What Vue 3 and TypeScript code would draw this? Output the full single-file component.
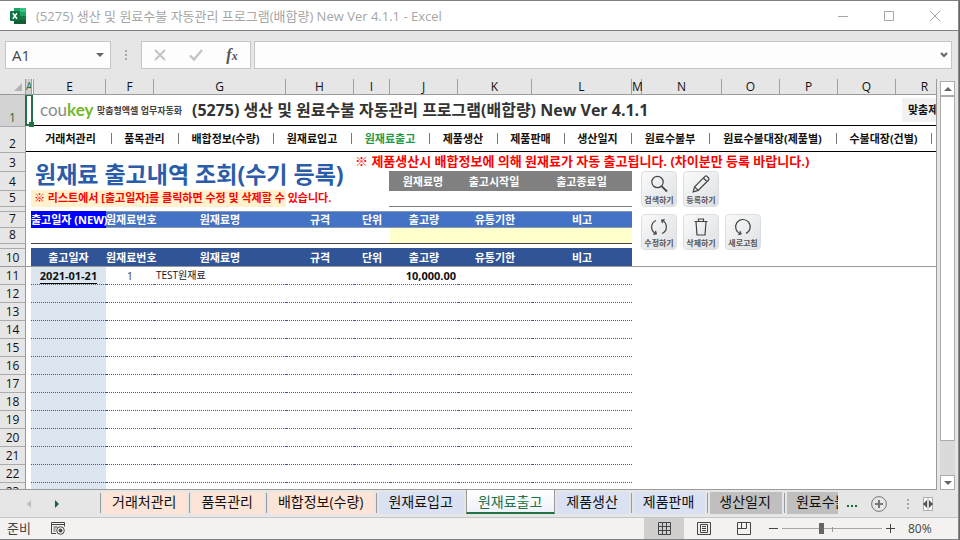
<script setup lang="ts">
import { ref } from 'vue'

interface Track { id: string; size: number }
interface SheetTab { name: string; tone: string }

const columns: Track[] = [
  { id: 'E', size: 72 }, { id: 'F', size: 48 }, { id: 'G', size: 132 }, { id: 'H', size: 68 },
  { id: 'I', size: 36 }, { id: 'J', size: 68 }, { id: 'K', size: 74 }, { id: 'L', size: 100 },
  { id: 'M', size: 10 }, { id: 'N', size: 80 }, { id: 'O', size: 58 }, { id: 'P', size: 58 },
  { id: 'Q', size: 58 }, { id: 'R', size: 58 },
]

const frozenRows: Track[] = [
  { id: '1', size: 32 }, { id: '2', size: 26 }, { id: '3', size: 19 }, { id: '4', size: 19 },
  { id: '5', size: 16 }, { id: '', size: 5 }, { id: '7', size: 16 }, { id: '8', size: 16 },
  { id: '', size: 5 }, { id: '10', size: 18 },
]
const dataRows = Array.from({ length: 13 }, (_, i) => i + 11)

const menu = ['거래처관리', '품목관리', '배합정보(수량)', '원재료입고', '원재료출고', '제품생산',
  '제품판매', '생산일지', '원료수불부', '원료수불대장(제품별)', '수불대장(건별)']
const activeMenu = '원재료출고'

const fields = ['원재료번호', '원재료명', '규격', '단위', '출고량', '유통기한', '비고']
const colWidths = [75, 48, 132, 68, 36, 68, 74, 100]

const tabs: SheetTab[] = [
  { name: '거래처관리', tone: 'peach' }, { name: '품목관리', tone: 'peach' },
  { name: '배합정보(수량)', tone: 'peach' }, { name: '원재료입고', tone: 'blue' },
  { name: '원재료출고', tone: 'active' }, { name: '제품생산', tone: 'blue' },
  { name: '제품판매', tone: 'blue' }, { name: '생산일지', tone: 'grey' },
  { name: '원료수불부', tone: 'grey' },
]

const cellName = ref('A1')
const formula = ref('')
const zoom = ref(39)
</script>

<template>
  <div class="window">
    <header class="titlebar">
      <svg class="app-icon" viewBox="0 0 16 16" width="16" height="16" aria-hidden="true">
        <path d="M4 0h6v4H4z" fill="#21a366" /><path d="M10 0h6v4h-6z" fill="#33c481" />
        <path d="M4 4h6v4H4z" fill="#107c41" /><path d="M10 4h6v4h-6z" fill="#21a366" />
        <path d="M4 8h6v8H4z" fill="#185c37" /><path d="M10 8h6v4h-6z" fill="#107c41" />
        <path d="M10 12h6v4h-6z" fill="#185c37" />
        <rect x="0" y="3" width="10" height="10" rx="1" fill="#0f7040" />
        <path d="M2.8 5.2l4.2 5.6M7 5.2l-4.2 5.6" stroke="#fff" stroke-width="1.5" />
      </svg>
      <span class="doc-title">(5275) 생산 및 원료수불 자동관리 프로그램(배합량) New Ver 4.1.1 - Excel</span>
      <div class="win-buttons">
        <button aria-label="최소화"><svg viewBox="0 0 10 10" width="10" height="10"><path d="M0 5.5h10" /></svg></button>
        <button aria-label="최대화"><svg viewBox="0 0 10 10" width="10" height="10"><path d="M.5.5h9v9h-9z" /></svg></button>
        <button aria-label="닫기"><svg viewBox="0 0 10 10" width="10" height="10"><path d="M0 0l10 10M10 0L0 10" /></svg></button>
      </div>
    </header>

    <div class="formula-bar">
      <div class="box name-box">
        <input v-model="cellName" aria-label="이름 상자">
        <button aria-label="이름 목록"><svg viewBox="0 0 8 4" width="8" height="4"><path d="M0 0h8L4 4z" fill="#666" /></svg></button>
      </div>
      <svg class="grip" viewBox="0 0 2 10" width="2" height="10"><path d="M0 0h2v2H0zM0 4h2v2H0zM0 8h2v2H0z" fill="#a6a6a6" /></svg>
      <div class="box fx-box">
        <button aria-label="취소"><svg viewBox="0 0 12 12" width="12" height="12"><path d="M1 1l10 10M11 1L1 11" stroke="#c4c4c4" stroke-width="2" /></svg></button>
        <button aria-label="입력"><svg viewBox="0 0 14 12" width="14" height="12"><path d="M1 6.500l4 4L13 1" fill="none" stroke="#c4c4c4" stroke-width="2.400" /></svg></button>
        <button class="fx" aria-label="함수 삽입"><i>f</i><i class="sub">x</i></button>
      </div>
      <div class="box input-box">
        <input v-model="formula" aria-label="수식 입력줄">
        <button aria-label="수식 입력줄 확장"><svg viewBox="0 0 8 6" width="8" height="6"><path d="M1 1l3 3 3-3" fill="none" stroke="#666" stroke-width="2" /></svg></button>
      </div>
    </div>

    <div class="workbook">
      <main class="sheet">
        <div class="col-heads">
          <div class="corner"><svg viewBox="0 0 8 8" width="8" height="8"><path d="M8 0v8H0z" fill="#b4b4b4" /></svg></div>
          <div class="col-head first">A</div>
          <div class="col-head stub"></div>
          <div v-for="c in columns" :key="c.id" class="col-head" :style="{ width: c.size + 'px' }">{{ c.id }}</div>
        </div>

        <div class="grid">
          <div class="row-heads">
            <div v-for="(r, i) in frozenRows" :key="i" class="row-head" :class="{ selected: i === 0 }" :style="{ height: r.size + 'px' }">{{ r.id }}</div>
            <div v-for="n in dataRows" :key="n" class="row-head data">{{ n }}</div>
          </div>

          <div class="cells">
            <div class="selection"><span class="handle"></span></div>
            <div class="banner">
              <span class="logo">cou<b>key</b></span>
              <span class="slogan">맞춤형엑셀 업무자동화</span>
              <h1>(5275) 생산 및 원료수불 자동관리 프로그램(배합량) New Ver 4.1.1</h1>
              <a href="#" class="custom">맞춤제</a>
            </div>
            <nav class="menu">
              <a v-for="m in menu" :key="m" href="#" :class="{ current: m === activeMenu }">{{ m }}</a>
            </nav>

            <section class="top">
              <h2>원재료 출고내역 조회(수기 등록)</h2>
              <p class="notice">※ 제품생산시 배합정보에 의해 원재료가 자동 출고됩니다. (차이분만 등록 바랍니다.)</p>
              <p class="hint"><span>※ 리스트에서 [출고일자]를 클릭하면 수정 및 삭제할 수 있습니다.</span></p>
              <table class="search">
                <colgroup><col style="width: 68px"><col style="width: 74px"><col style="width: 101px"></colgroup>
                <thead><tr><th>원재료명</th><th>출고시작일</th><th>출고종료일</th></tr></thead>
                <tbody><tr><td></td><td></td><td></td></tr></tbody>
              </table>

              <div class="actions">
                <button>
                  <svg viewBox="0 0 20 20"><circle cx="8.5" cy="8" r="5.7" /><path d="M12.6 12.2l5.4 5.3" stroke-width="1.8" /></svg>
                  <span>검색하기</span>
                </button>
                <button>
                  <svg viewBox="0 0 20 20"><path d="M2.2 17.8l1.4-5L14 2.4q1-.9 2 0l1.6 1.6q.9 1 0 2L7.2 16.400zM12.400 4l3.600 3.600M3.600 12.800l3.600 3.600" /></svg>
                  <span>등록하기</span>
                </button>
                <i class="break"></i>
                <button>
                  <svg viewBox="0 0 20 20"><path d="M7 3.500A7.200 7.200 0 0 0 6.500 16.500M13 16.500A7.200 7.200 0 0 0 13.500 3.500M4.300 17.300l3-.5-.8-3M15.700 2.700l-3 .5.8 3" /></svg>
                  <span>수정하기</span>
                </button>
                <button>
                  <svg viewBox="0 0 20 20"><path d="M3.500 4.500h13M7.500 4.500v-2.500h5v2.500M5 4.500l1 13.500h8l1-13.500" /></svg>
                  <span>삭제하기</span>
                </button>
                <button>
                  <svg viewBox="0 0 20 20"><path d="M7.800 16.800A7.300 7.300 0 1 1 13 16.400M5.300 17.700l2.700-.8-1-2.800" /></svg>
                  <span>새로고침</span>
                </button>
              </div>

              <div class="heads">
                <table class="entry">
                  <colgroup><col v-for="(w, i) in colWidths" :key="i" :style="{ width: w + 'px' }"></colgroup>
                  <thead><tr><th class="new">출고일자 (NEW)</th><th v-for="f in fields" :key="f">{{ f }}</th></tr></thead>
                  <tbody><tr><td v-for="(w, i) in colWidths" :key="i" :class="{ fill: i > 4 }"></td></tr></tbody>
                </table>
              </div>
            </section>

            <table class="list">
              <colgroup><col v-for="(w, i) in colWidths" :key="i" :style="{ width: w + 'px' }"></colgroup>
              <thead><tr><th>출고일자</th><th v-for="f in fields" :key="f">{{ f }}</th></tr></thead>
              <tbody>
                <tr>
                  <td class="date"><a href="#">2021-01-21</a></td>
                  <td class="no">1</td><td class="name">TEST원재료</td><td></td><td></td>
                  <td class="qty">10,000.00</td><td></td><td></td>
                </tr>
                <tr v-for="n in dataRows.length - 1" :key="n"><td class="date"></td><td v-for="k in 7" :key="k"></td></tr>
              </tbody>
            </table>
          </div>
          <div class="freeze"></div>
        </div>
      </main>

      <div class="scroll">
        <button aria-label="위로"><svg viewBox="0 0 8 4" width="8" height="4"><path d="M0 4h8L4 0z" fill="#666" /></svg></button>
        <div class="track"><div class="thumb"></div></div>
        <button aria-label="아래로"><svg viewBox="0 0 8 4" width="8" height="4"><path d="M0 0h8L4 4z" fill="#666" /></svg></button>
      </div>
    </div>

    <div class="tabs">
      <div class="tab-nav">
        <button aria-label="이전 시트"><svg viewBox="0 0 4 8" width="4" height="8"><path d="M4 0v8L0 4z" fill="#bdbdbd" /></svg></button>
        <button aria-label="다음 시트"><svg viewBox="0 0 4 8" width="4" height="8"><path d="M0 0v8l4-4z" fill="#0e6b3a" /></svg></button>
      </div>
      <div class="tab-list">
        <button v-for="t in tabs" :key="t.name" class="tab" :class="t.tone"><span>{{ t.name }}</span></button>
      </div>
      <button class="more" aria-label="시트 더 보기"><svg viewBox="0 0 11 2" width="11" height="2"><path d="M0 0h2v2H0zM4 0h2v2H4zM8 0h2v2H8z" fill="#0e6b3a" /></svg></button>
      <button class="add" aria-label="새 시트"><svg viewBox="0 0 16 16" width="16" height="16"><circle cx="8" cy="8" r="7.400" fill="none" stroke="#777" /><path d="M8 4v8M4 8h8" stroke="#777" stroke-width="2" /></svg></button>
      <svg class="grip" viewBox="0 0 2 10" width="2" height="10"><path d="M0 0h2v2H0zM0 4h2v2H0zM0 8h2v2H0z" fill="#a6a6a6" /></svg>
      <svg class="hscroll" viewBox="0 0 10 14" width="10" height="14"><path d="M.5.5h9v13h-9z" fill="#fff" stroke="#ababab" /><path d="M4 3v8L0 7zM6 3v8l4-4z" fill="#555" /><path d="M5 0v14" stroke="#ababab" /></svg>
    </div>

    <footer class="status">
      <span class="ready">준비</span>
      <svg class="macro" viewBox="0 0 14 13" width="14" height="13" fill="none" stroke="#444"><path d="M5 11.500H.5v-11h13v4M.5 2.500h13M2.500 5h4M2.500 7h2M2.500 9h2" /><circle cx="9.500" cy="8.500" r="3.800" /><circle cx="9.500" cy="8.500" r="1.500" fill="#444" /></svg>
      <div class="views">
        <button class="on" aria-label="기본"><svg viewBox="0 0 13 13" width="13" height="13"><path d="M.5.5h12v12H.5zM4.500.5v12M8.500.5v12M.5 4.500h12M.5 8.500h12" /></svg></button>
        <button aria-label="페이지 레이아웃"><svg viewBox="0 0 14 13" width="14" height="13"><path d="M.5.5h13v12H.5zM3.500 2.500h7v8h-7zM5 4.500h4M5 6.500h4M5 8.500h4" /></svg></button>
        <button aria-label="페이지 나누기 미리 보기"><svg viewBox="0 0 14 13" width="14" height="13"><path d="M.5.5h13v12H.5zM4.500.5v6M9.500.5v6M.5 6.500h9" /></svg></button>
      </div>
      <div class="zoom">
        <button aria-label="축소"><svg viewBox="0 0 9 9" width="9" height="9"><path d="M0 4.500h9" /></svg></button>
        <div class="slider"><input v-model="zoom" type="range" min="0" max="100" aria-label="확대/축소"></div>
        <button aria-label="확대"><svg viewBox="0 0 9 9" width="9" height="9"><path d="M0 4.500h9M4.500 0v9" /></svg></button>
        <span class="percent">80%</span>
      </div>
    </footer>
  </div>
</template>

<style>
body {
  overflow: hidden;
}
</style>

<style scoped>
.window {
  box-sizing: border-box;
  display: flex;
  flex-direction: column;
  height: 100vh;
  border-top: 1px solid #808080;
  border-bottom: 1px solid #808080;
  border-right: 1px solid #1979ca;
  background: #e6e6e6;
  color: #111;
  font-family: "Open Sans", "Noto Sans CJK KR", sans-serif;
  font-size: 12px;
  box-shadow: inset -1px 0 #8a8a8a;
}
.window * { box-sizing: border-box; }
button {
  display: flex;
  align-items: center;
  justify-content: center;
  padding: 0;
  border: 0;
  background: none;
  color: inherit;
  font: inherit;
}
input {
  min-width: 0;
  padding: 0;
  border: 0;
  outline: 0;
  background: none;
  color: inherit;
  font: inherit;
}
a { color: inherit; text-decoration: none; }
h1, h2, p { margin: 0; }

.titlebar {
  display: flex;
  align-items: center;
  flex: none;
  height: 30px;
  padding-left: 10px;
  margin-right: 1px;
  border-bottom: 1px solid #808080;
  background: #fff;
}
.doc-title {
  flex: 1;
  padding-left: 10px;
  color: #a6a6a6;
  font-size: 13px;
  line-height: 20px;
  white-space: nowrap;
}
.win-buttons { display: flex; }
.win-buttons button { width: 46px; height: 28px; }
.win-buttons svg { fill: none; stroke: #a6a6a6; }

.formula-bar {
  display: flex;
  align-items: center;
  flex: none;
  height: 48px;
  padding: 0 7px 0 5px;
}
.box {
  display: flex;
  height: 28px;
  border: 1px solid #c6c6c6;
  background: #fdfdfd;
}
.name-box { width: 106px; }
.name-box input { flex: 1; padding-left: 6px; color: #444; font-size: 15px; }
.name-box button { width: 20px; }
.formula-bar .grip { margin: 0 14px; }
.fx-box { width: 110px; margin-right: 3px; }
.fx-box button { flex: 1; }
.fx { color: #555; font: bold 16px "Liberation Serif", serif; }
.fx .sub { align-self: end; padding-bottom: 4px; font-size: 12px; }
.input-box { flex: 1; }
.input-box input { flex: 1; padding-left: 6px; font-size: 14px; }
.input-box button { width: 14px; }

.workbook { display: flex; flex: 1; min-height: 0; }
.sheet {
  display: flex;
  flex: 1;
  flex-direction: column;
  min-width: 0;
  border-right: 1px solid #9a9a9a;
}
.col-heads {
  display: flex;
  flex: none;
  height: 16px;
  overflow: hidden;
  border-bottom: 1px solid #9a9a9a;
}
.corner {
  display: flex;
  flex: none;
  justify-content: flex-end;
  align-items: center;
  width: 26px;
  padding-right: 3px;
  border-right: 1px solid #9a9a9a;
}
.col-head {
  flex: none;
  border-right: 1px solid #a0a0a0;
  line-height: 15px;
  text-align: center;
}
.first { width: 6px; overflow: hidden; background: #cfcfcf; color: #217346; font-size: 10px; }
.stub { width: 2px; background: #f4f4f4; }

.grid {
  display: flex;
  flex: 1;
  position: relative;
  min-height: 0;
  overflow: hidden;
  background: #fff;
  border-bottom: 1px solid #9a9a9a;
}
.row-heads {
  flex: none;
  width: 26px;
  border-right: 1px solid #9a9a9a;
  background: #e6e6e6;
}
.row-head {
  display: flex;
  align-items: flex-end;
  justify-content: center;
  border-bottom: 1px solid #ababab;
  line-height: 16px;
}
.row-head.data { height: 18px; }
.row-head.selected { background: #d2d2d2; color: #217346; }
.cells { flex: 1; min-width: 0; overflow: hidden; }
.selection {
  position: absolute;
  top: -1px;
  left: 25px;
  width: 8px;
  height: 32px;
  border: 2px solid #217346;
}
.handle {
  position: absolute;
  right: -3px;
  bottom: -3px;
  width: 5px;
  height: 5px;
  background: #217346;
}
.freeze {
  position: absolute;
  top: 171px;
  left: 0;
  right: 0;
  height: 1px;
  background: #9a9a9a;
}

.banner {
  display: flex;
  align-items: center;
  height: 31px;
  padding-left: 14px;
  border-bottom: 1px solid #000;
  white-space: nowrap;
}
.logo {
  width: 57px;
  color: #8b8b8b;
  font: 17px/24px Lato, sans-serif;
}
.logo b { color: #76b82a; }
.slogan { width: 95px; color: #444; font-size: 9px; font-weight: bold; }
h1 { flex: 1; color: #333; font-size: 16px; line-height: 24px; }
.custom {
  width: 34px;
  padding-left: 6px;
  overflow: hidden;
  background: #f2f2f2;
  font-size: 11px;
  font-weight: bold;
  line-height: 24px;
}

.menu {
  display: grid;
  grid-template-columns: 81px 67px 95px 78px 78px 68px 67px 67px 78px 127px 95px;
  align-items: center;
  height: 26px;
  padding-left: 5px;
  border-bottom: 1px solid #000;
}
.menu a {
  padding-right: 1px;
  border-right: 1px solid #777;
  font-size: 11px;
  font-weight: bold;
  line-height: 11px;
  text-align: center;
  white-space: nowrap;
}
.menu .current { color: #1c9c46; }

.top {
  display: grid;
  grid-template-columns: 324px 34px 243px 1fr;
  grid-template-rows: 19px 19px 17px 41px;
  padding-left: 5px;
}
h2 {
  grid-area: 1 / 1 / 3 / 3;
  padding: 4px 0 0 4px;
  color: #2a5caa;
  font-size: 23px;
  line-height: 36px;
  white-space: nowrap;
}
.notice {
  grid-area: 1 / 2 / 2 / 5;
  color: #f00;
  font-size: 13px;
  font-weight: bold;
  line-height: 19px;
  white-space: nowrap;
}
.hint {
  grid-area: 3 / 1 / 4 / 3;
  width: 255px;
  padding-left: 3px;
  background: #fff2cc;
  color: #f00;
  font-size: 11px;
  font-weight: bold;
  line-height: 16px;
  white-space: nowrap;
}
table { border-collapse: separate; border-spacing: 0; table-layout: fixed; }
th, td {
  padding: 0;
  font-size: 11px;
  line-height: 15px;
  white-space: nowrap;
}
th { color: #fff; font-weight: bold; text-align: center; }
.search { grid-area: 2 / 3 / 4 / 4; width: 243px; }
.search th { height: 20px; background: #808080; }
.search td { height: 16px; border-bottom: 1px solid #808080; }
.actions {
  grid-area: 2 / 4 / 5 / 5;
  display: flex;
  flex-wrap: wrap;
  align-content: flex-start;
  gap: 0 6px;
  padding-left: 9px;
}
.actions button {
  flex-direction: column;
  width: 36px;
  height: 36px;
  border: 1px solid #dcdfe2;
  border-radius: 4px;
  background: linear-gradient(135deg, #fafafa, #dde0e3);
  color: #555;
  font-size: 8px;
  font-weight: bold;
  line-height: 11px;
  white-space: nowrap;
}
.actions svg { width: 20px; height: 20px; fill: none; stroke: #444; stroke-width: 1.2; }
.break { flex-basis: 100%; height: 7px; }
.heads { grid-area: 4 / 1 / 5 / 4; padding: 4px 0; }
.entry { width: 601px; }
.entry th {
  height: 17px;
  border-top: 1px solid #8a98b0;
  border-bottom: 1px solid #8a98b0;
  background: #4472c4;
}
.entry th.new { border-color: #00f; background: #00f; }
.entry td { height: 16px; border-bottom: 1px solid #444; }
.entry .fill { background: #ffffcc; }

.list { width: 601px; margin-left: 5px; }
.list th { height: 19px; background: #305496; padding-bottom: 1px; }
.list td { height: 18px; border-bottom: 1px dotted #2a5caa; }
.list .date { background: #dce6f0; font-weight: bold; text-align: center; }
.date a { border-bottom: 1px solid #000; }
.list .no { color: #444; text-align: center; }
.list .name { padding-left: 2px; font-size: 10px; }
.list .qty { padding-right: 2px; font-weight: bold; text-align: right; }

.scroll {
  display: flex;
  flex: none;
  flex-direction: column;
  width: 22px;
  padding: 2px 4px 0 3px;
}
.scroll button { flex: none; height: 15px; border: 1px solid #ababab; background: #fff; }
.track { flex: 1; background: #dadada; }
.thumb { height: 91%; border: 1px solid #ababab; background: #fff; }

.tabs { display: flex; flex: none; height: 27px; align-items: center; padding-right: 26px; }
.tab-nav { display: flex; flex: none; width: 100px; height: 24px; padding-left: 15px; }
.tab-nav button { width: 28px; }
.tab-list {
  display: flex;
  flex: 1;
  align-self: stretch;
  min-width: 0;
  overflow: hidden;
}
.tab {
  flex: none;
  align-self: stretch;
  align-items: flex-start;
  padding: 2px 2px 3px;
  border-left: 1px solid transparent;
  background: linear-gradient(#9a9a9a, #9a9a9a) 0 3px / 1px 20px no-repeat border-box;
  font-size: 14px;
  line-height: 20px;
}
.tab span { padding: 0 11px 2px 9px; }
.peach span { background: #fce4d6; }
.blue span { background: #d9e1f2; }
.grey span { background: #bfbfbf; }
.tab.active {
  height: 24px;
  padding-right: 1px;
  border-right: 1px solid #9a9a9a;
  border-left-color: #9a9a9a;
  border-bottom: 2px solid #217346;
  background: linear-gradient(#fff, #eef2f9);
  color: #217346;
}
.tab.active + .tab { border-left: 0; background: none; }
.more { width: 28px; height: 20px; padding-top: 4px; }
.add { width: 26px; height: 20px; }
.tabs .grip { margin: 0 14px 0 15px; }

.status {
  display: flex;
  align-items: center;
  flex: none;
  height: 22px;
  margin-right: 1px;
  padding: 0 26px 0 7px;
  border-top: 1px solid #c6c6c6;
  background: #f3f2f1;
  color: #444;
}
.ready { font-size: 13px; line-height: 18px; padding-bottom: 2px; }
.macro { margin-left: 20px; }
.views { display: flex; align-self: stretch; margin-left: auto; }
.views button { width: 40px; }
.views .on { background: #d0cfce; }
.views svg, .zoom svg { fill: none; stroke: #444; }
.zoom { display: flex; align-items: center; margin-left: 5px; }
.slider {
  position: relative;
  display: flex;
  align-items: center;
  width: 100px;
  height: 20px;
  margin: 0 4px;
}
.slider::after {
  content: "";
  position: absolute;
  left: 50%;
  top: 8px;
  width: 1px;
  height: 5px;
  background: #9a9a9a;
}
.slider input {
  width: 100%;
  height: 12px;
  margin: 0;
  appearance: none;
  background: linear-gradient(#a6a6a6, #a6a6a6) center / 100% 1px no-repeat;
}
.slider input::-webkit-slider-thumb {
  width: 5px;
  height: 11px;
  appearance: none;
  background: #666;
}
.percent { width: 24px; margin-left: 13px; font-size: 12px; }
</style>
